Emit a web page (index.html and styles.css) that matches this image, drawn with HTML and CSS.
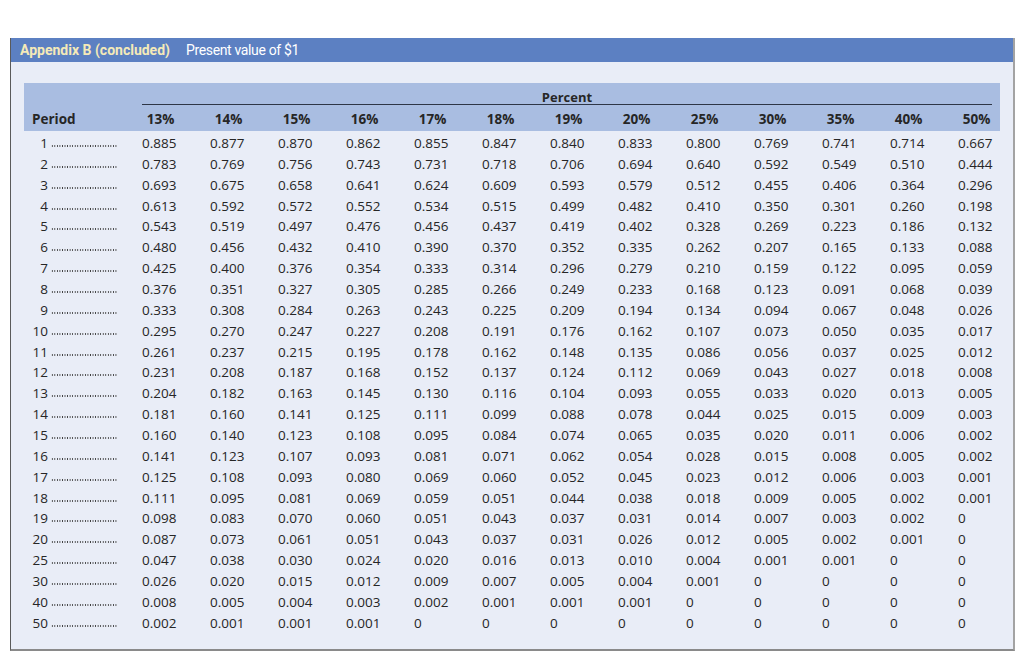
FILE: index.html
```html
<!DOCTYPE html>
<html lang="en">
<head>
<meta charset="utf-8">
<title>Appendix B (concluded) Present value of $1</title>
<link rel="stylesheet" href="styles.css">
</head>
<body>
<div class="sheet">
  <div class="titlebar">
    <span class="tag">Appendix B (concluded)</span>
    <span class="title">Present value of $1</span>
  </div>
  <div class="content">
    <div class="band">
      <div class="percent">Percent</div>
      <div class="hrow">
        <div class="plabel">Period</div>
        <div class="h"><span>13%</span></div><div class="h"><span>14%</span></div><div class="h"><span>15%</span></div><div class="h"><span>16%</span></div><div class="h"><span>17%</span></div><div class="h"><span>18%</span></div><div class="h"><span>19%</span></div><div class="h"><span>20%</span></div><div class="h"><span>25%</span></div><div class="h"><span>30%</span></div><div class="h"><span>35%</span></div><div class="h"><span>40%</span></div><div class="h"><span>50%</span></div>
      </div>
    </div>
    <div class="rows">
      <div class="row"><div class="p"><span class="n">1</span><span class="dots"></span></div><div>0.885</div><div>0.877</div><div>0.870</div><div>0.862</div><div>0.855</div><div>0.847</div><div>0.840</div><div>0.833</div><div>0.800</div><div>0.769</div><div>0.741</div><div>0.714</div><div>0.667</div></div>
      <div class="row"><div class="p"><span class="n">2</span><span class="dots"></span></div><div>0.783</div><div>0.769</div><div>0.756</div><div>0.743</div><div>0.731</div><div>0.718</div><div>0.706</div><div>0.694</div><div>0.640</div><div>0.592</div><div>0.549</div><div>0.510</div><div>0.444</div></div>
      <div class="row"><div class="p"><span class="n">3</span><span class="dots"></span></div><div>0.693</div><div>0.675</div><div>0.658</div><div>0.641</div><div>0.624</div><div>0.609</div><div>0.593</div><div>0.579</div><div>0.512</div><div>0.455</div><div>0.406</div><div>0.364</div><div>0.296</div></div>
      <div class="row"><div class="p"><span class="n">4</span><span class="dots"></span></div><div>0.613</div><div>0.592</div><div>0.572</div><div>0.552</div><div>0.534</div><div>0.515</div><div>0.499</div><div>0.482</div><div>0.410</div><div>0.350</div><div>0.301</div><div>0.260</div><div>0.198</div></div>
      <div class="row"><div class="p"><span class="n">5</span><span class="dots"></span></div><div>0.543</div><div>0.519</div><div>0.497</div><div>0.476</div><div>0.456</div><div>0.437</div><div>0.419</div><div>0.402</div><div>0.328</div><div>0.269</div><div>0.223</div><div>0.186</div><div>0.132</div></div>
      <div class="row"><div class="p"><span class="n">6</span><span class="dots"></span></div><div>0.480</div><div>0.456</div><div>0.432</div><div>0.410</div><div>0.390</div><div>0.370</div><div>0.352</div><div>0.335</div><div>0.262</div><div>0.207</div><div>0.165</div><div>0.133</div><div>0.088</div></div>
      <div class="row"><div class="p"><span class="n">7</span><span class="dots"></span></div><div>0.425</div><div>0.400</div><div>0.376</div><div>0.354</div><div>0.333</div><div>0.314</div><div>0.296</div><div>0.279</div><div>0.210</div><div>0.159</div><div>0.122</div><div>0.095</div><div>0.059</div></div>
      <div class="row"><div class="p"><span class="n">8</span><span class="dots"></span></div><div>0.376</div><div>0.351</div><div>0.327</div><div>0.305</div><div>0.285</div><div>0.266</div><div>0.249</div><div>0.233</div><div>0.168</div><div>0.123</div><div>0.091</div><div>0.068</div><div>0.039</div></div>
      <div class="row"><div class="p"><span class="n">9</span><span class="dots"></span></div><div>0.333</div><div>0.308</div><div>0.284</div><div>0.263</div><div>0.243</div><div>0.225</div><div>0.209</div><div>0.194</div><div>0.134</div><div>0.094</div><div>0.067</div><div>0.048</div><div>0.026</div></div>
      <div class="row"><div class="p"><span class="n">10</span><span class="dots"></span></div><div>0.295</div><div>0.270</div><div>0.247</div><div>0.227</div><div>0.208</div><div>0.191</div><div>0.176</div><div>0.162</div><div>0.107</div><div>0.073</div><div>0.050</div><div>0.035</div><div>0.017</div></div>
      <div class="row"><div class="p"><span class="n">11</span><span class="dots"></span></div><div>0.261</div><div>0.237</div><div>0.215</div><div>0.195</div><div>0.178</div><div>0.162</div><div>0.148</div><div>0.135</div><div>0.086</div><div>0.056</div><div>0.037</div><div>0.025</div><div>0.012</div></div>
      <div class="row"><div class="p"><span class="n">12</span><span class="dots"></span></div><div>0.231</div><div>0.208</div><div>0.187</div><div>0.168</div><div>0.152</div><div>0.137</div><div>0.124</div><div>0.112</div><div>0.069</div><div>0.043</div><div>0.027</div><div>0.018</div><div>0.008</div></div>
      <div class="row"><div class="p"><span class="n">13</span><span class="dots"></span></div><div>0.204</div><div>0.182</div><div>0.163</div><div>0.145</div><div>0.130</div><div>0.116</div><div>0.104</div><div>0.093</div><div>0.055</div><div>0.033</div><div>0.020</div><div>0.013</div><div>0.005</div></div>
      <div class="row"><div class="p"><span class="n">14</span><span class="dots"></span></div><div>0.181</div><div>0.160</div><div>0.141</div><div>0.125</div><div>0.111</div><div>0.099</div><div>0.088</div><div>0.078</div><div>0.044</div><div>0.025</div><div>0.015</div><div>0.009</div><div>0.003</div></div>
      <div class="row"><div class="p"><span class="n">15</span><span class="dots"></span></div><div>0.160</div><div>0.140</div><div>0.123</div><div>0.108</div><div>0.095</div><div>0.084</div><div>0.074</div><div>0.065</div><div>0.035</div><div>0.020</div><div>0.011</div><div>0.006</div><div>0.002</div></div>
      <div class="row"><div class="p"><span class="n">16</span><span class="dots"></span></div><div>0.141</div><div>0.123</div><div>0.107</div><div>0.093</div><div>0.081</div><div>0.071</div><div>0.062</div><div>0.054</div><div>0.028</div><div>0.015</div><div>0.008</div><div>0.005</div><div>0.002</div></div>
      <div class="row"><div class="p"><span class="n">17</span><span class="dots"></span></div><div>0.125</div><div>0.108</div><div>0.093</div><div>0.080</div><div>0.069</div><div>0.060</div><div>0.052</div><div>0.045</div><div>0.023</div><div>0.012</div><div>0.006</div><div>0.003</div><div>0.001</div></div>
      <div class="row"><div class="p"><span class="n">18</span><span class="dots"></span></div><div>0.111</div><div>0.095</div><div>0.081</div><div>0.069</div><div>0.059</div><div>0.051</div><div>0.044</div><div>0.038</div><div>0.018</div><div>0.009</div><div>0.005</div><div>0.002</div><div>0.001</div></div>
      <div class="row"><div class="p"><span class="n">19</span><span class="dots"></span></div><div>0.098</div><div>0.083</div><div>0.070</div><div>0.060</div><div>0.051</div><div>0.043</div><div>0.037</div><div>0.031</div><div>0.014</div><div>0.007</div><div>0.003</div><div>0.002</div><div>0</div></div>
      <div class="row"><div class="p"><span class="n">20</span><span class="dots"></span></div><div>0.087</div><div>0.073</div><div>0.061</div><div>0.051</div><div>0.043</div><div>0.037</div><div>0.031</div><div>0.026</div><div>0.012</div><div>0.005</div><div>0.002</div><div>0.001</div><div>0</div></div>
      <div class="row"><div class="p"><span class="n">25</span><span class="dots"></span></div><div>0.047</div><div>0.038</div><div>0.030</div><div>0.024</div><div>0.020</div><div>0.016</div><div>0.013</div><div>0.010</div><div>0.004</div><div>0.001</div><div>0.001</div><div>0</div><div>0</div></div>
      <div class="row"><div class="p"><span class="n">30</span><span class="dots"></span></div><div>0.026</div><div>0.020</div><div>0.015</div><div>0.012</div><div>0.009</div><div>0.007</div><div>0.005</div><div>0.004</div><div>0.001</div><div>0</div><div>0</div><div>0</div><div>0</div></div>
      <div class="row"><div class="p"><span class="n">40</span><span class="dots"></span></div><div>0.008</div><div>0.005</div><div>0.004</div><div>0.003</div><div>0.002</div><div>0.001</div><div>0.001</div><div>0.001</div><div>0</div><div>0</div><div>0</div><div>0</div><div>0</div></div>
      <div class="row"><div class="p"><span class="n">50</span><span class="dots"></span></div><div>0.002</div><div>0.001</div><div>0.001</div><div>0.001</div><div>0</div><div>0</div><div>0</div><div>0</div><div>0</div><div>0</div><div>0</div><div>0</div><div>0</div></div>
    </div>
  </div>
</div>
</body>
</html>
```

FILE: styles.css
```css
* { box-sizing: border-box; }

body {
  margin: 0;
  background: #ffffff;
  font-family: "Open Sans", "Noto Sans", sans-serif;
  color: #262626;
}

.sheet {
  margin: 38px 0 0 10px;
  width: 1005px;
  height: 613px;
  background: #e9edf7;
  border-left: 1px solid #5a5a5a;
  border-right: 2px solid #a3a3a3;
  border-bottom: 2px solid #8a8a8a;
}

.titlebar {
  height: 24px;
  background: #5c80c2;
  display: flex;
  align-items: center;
  gap: 16px;
  padding-left: 9px;
  font-family: Roboto, "Open Sans", sans-serif;
}

.tag {
  font-size: 14px;
  font-weight: 700;
  color: #f5eab8;
}

.title {
  font-size: 14px;
  letter-spacing: -0.35px;
  color: #ffffff;
}

.content {
  padding: 21px 0 0 13px;
}

.band {
  width: 976px;
  height: 48px;
  background: #a9bde1;
}

.percent {
  margin-left: 118px;
  margin-right: 8px;
  padding-top: 6px;
  height: 22px;
  line-height: 16px;
  text-align: center;
  font-weight: 700;
  font-size: 13px;
  border-bottom: 1px solid #2e3646;
}

.hrow {
  display: grid;
  grid-template-columns: 118px repeat(12, 68px) 42px;
  padding-top: 3px;
  height: 25px;
  line-height: 22px;
  font-weight: 700;
  font-size: 13.5px;
}

.plabel {
  padding-left: 8px;
}

.h span {
  display: inline-block;
  width: 37px;
  text-align: center;
}

.rows {
  padding-top: 1.5px;
}

.row {
  display: grid;
  grid-template-columns: 118px repeat(12, 68px) 42px;
  height: 20.87px;
  align-items: center;
  font-size: 13.5px;
  line-height: 20px;
}

.p {
  display: flex;
  align-items: center;
}

.n {
  width: 24px;
  text-align: right;
  font-size: 13.5px;
}

.dots {
  margin-left: 3px;
  width: 67px;
  height: 4px;
  margin-top: 6px;
  background-image: radial-gradient(circle, #3a3a3a 0.55px, transparent 0.9px);
  background-size: 2.55px 4px;
  background-repeat: repeat-x;
}
```
